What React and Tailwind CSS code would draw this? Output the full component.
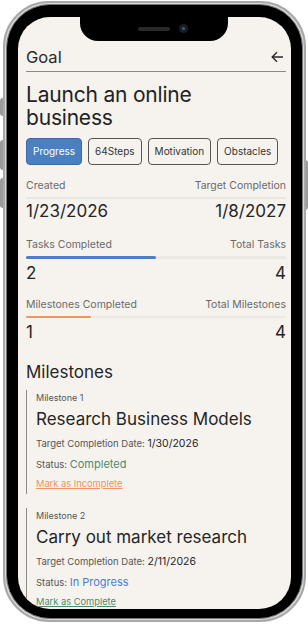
export default function App() {
  const font = { fontFamily: 'Inter, "Noto Sans", sans-serif' };

  return (
    <div className="w-[308px] h-[627px] bg-white relative overflow-hidden" style={font}>
      {/* side buttons */}
      <div className="absolute left-0 top-[98px] w-[3px] h-[18px] bg-[#9a9a9a] rounded-l-sm"></div>
      <div className="absolute left-0 top-[140px] w-[3px] h-[30px] bg-[#9a9a9a] rounded-l-sm"></div>
      <div className="absolute left-0 top-[178px] w-[3px] h-[30px] bg-[#9a9a9a] rounded-l-sm"></div>
      <div className="absolute right-0 top-[160px] w-[3px] h-[50px] bg-[#9a9a9a] rounded-r-sm"></div>

      {/* phone body */}
      <div className="absolute left-[3px] top-[1px] w-[303px] h-[621px] rounded-[46px] border-2 border-[#a8a8a8] bg-[#d9d9d9] p-[1px]">
        <div className="w-full h-full rounded-[44px] border-[1.5px] border-[#777] bg-black p-[11px] pt-[12px] pb-[9px]">
          <div className="relative w-full h-full rounded-[32px] bg-[#f6f3ef] overflow-hidden text-[#222]">
            {/* notch */}
            <div className="absolute left-[62px] top-0 w-[148px] h-[24px] bg-black rounded-b-[18px]">
              <div className="absolute left-[58px] top-[10px] w-[32px] h-[4px] rounded-full bg-[#2a2a2a]"></div>
              <div className="absolute left-[99px] top-[7px] w-[9px] h-[9px] rounded-full bg-[#1b1d24] flex items-center justify-center">
                <div className="w-[3px] h-[3px] rounded-full bg-[#3a5a8a]"></div>
              </div>
            </div>

            <div className="pl-[8px] pr-[5px] pt-[29px]">
              {/* header */}
              <div className="flex items-center justify-between h-[22px]">
                <span className="text-[16.5px] text-[#2a2a2a]">Goal</span>
                <svg width="13" height="12" viewBox="0 0 13 12" fill="none" stroke="#2a2a2a" strokeWidth="1.4" className="mr-[2px]">
                  <path d="M12 6H1.5M6 1.2L1.2 6L6 10.8" />
                </svg>
              </div>
              <div className="h-px bg-[#8a8a8a] mt-[3px]"></div>

              {/* title */}
              <h1 className="text-[21px] leading-[23px] mt-[11px] text-[#222] tracking-[-0.2px]">
                Launch an online<br />business
              </h1>

              {/* tabs */}
              <div className="flex gap-[6px] mt-[9px]">
                <button className="h-[27px] px-[6px] rounded-[4px] border border-[#3d6aa5] bg-[#4a80c2] text-white text-[10px]">Progress</button>
                <button className="h-[27px] px-[6px] rounded-[4px] border border-[#555] text-[#333] text-[10px]">64Steps</button>
                <button className="h-[27px] px-[6px] rounded-[4px] border border-[#555] text-[#333] text-[10px]">Motivation</button>
                <button className="h-[27px] px-[6px] rounded-[4px] border border-[#555] text-[#333] text-[10px]">Obstacles</button>
              </div>

              {/* dates */}
              <div className="flex justify-between text-[10.5px] text-[#6a6a6a] mt-[14px] leading-[14px]">
                <span>Created</span>
                <span>Target Completion</span>
              </div>
              <div className="h-[2px] bg-[#ebe7e2] mt-[4px]"></div>
              <div className="flex justify-between text-[17px] text-[#252525] mt-0 leading-[24px]">
                <span>1/23/2026</span>
                <span>1/8/2027</span>
              </div>

              {/* tasks */}
              <div className="flex justify-between text-[10.5px] text-[#6a6a6a] mt-[15px] leading-[14px]">
                <span>Tasks Completed</span>
                <span>Total Tasks</span>
              </div>
              <div className="h-[2.5px] bg-[#ebe7e2] mt-[4px] rounded-full">
                <div className="h-full bg-[#4a80c8] rounded-full" style={{ width: '50%' }}></div>
              </div>
              <div className="flex justify-between text-[17px] text-[#252525] mt-[4px] leading-[20px]">
                <span>2</span>
                <span>4</span>
              </div>

              {/* milestones */}
              <div className="flex justify-between text-[10.5px] text-[#6a6a6a] mt-[15px] leading-[14px]">
                <span>Milestones Completed</span>
                <span>Total Milestones</span>
              </div>
              <div className="h-[2.5px] bg-[#ebe7e2] mt-[4px] rounded-full">
                <div className="h-full bg-[#f4935a] rounded-full" style={{ width: '25%' }}></div>
              </div>
              <div className="flex justify-between text-[17px] text-[#252525] mt-[4px] leading-[20px]">
                <span>1</span>
                <span>4</span>
              </div>

              <h2 className="text-[17px] text-[#252525] mt-[18px] leading-[24px]">Milestones</h2>

              {/* milestone 1 */}
              <div className="border-l border-[#8a8a8a] pl-[9px] mt-[6px] pb-[3px]">
                <div className="text-[9px] text-[#555] leading-[14px] pt-[1px]">Milestone 1</div>
                <div className="text-[17px] text-[#252525] leading-[22px] mt-[3px]">Research Business Models</div>
                <div className="text-[9.5px] text-[#555] leading-[14px] mt-[7px]">
                  Target Completion Date: <span className="text-[10.5px] text-[#252525]">1/30/2026</span>
                </div>
                <div className="text-[9.5px] text-[#555] leading-[16px] mt-[5px]">
                  Status: <span className="text-[11px] text-[#4f8a6e]">Completed</span>
                </div>
                <div className="text-[9.3px] text-[#f0935c] underline leading-[14px] mt-[4px]">Mark as Incomplete</div>
              </div>

              {/* milestone 2 */}
              <div className="border-l border-[#8a8a8a] pl-[9px] mt-[14px] pb-[3px]">
                <div className="text-[9px] text-[#555] leading-[14px] pt-[1px]">Milestone 2</div>
                <div className="text-[17px] text-[#252525] leading-[22px] mt-[3px]">Carry out market research</div>
                <div className="text-[9.5px] text-[#555] leading-[14px] mt-[7px]">
                  Target Completion Date: <span className="text-[10.5px] text-[#252525]">2/11/2026</span>
                </div>
                <div className="text-[9.5px] text-[#555] leading-[16px] mt-[5px]">
                  Status: <span className="text-[11px] text-[#4a80c8]">In Progress</span>
                </div>
                <div className="text-[9.3px] text-[#4f8a6e] underline leading-[14px] mt-[4px]">Mark as Complete</div>
              </div>
            </div>
          </div>
        </div>
      </div>
    </div>
  );
}
